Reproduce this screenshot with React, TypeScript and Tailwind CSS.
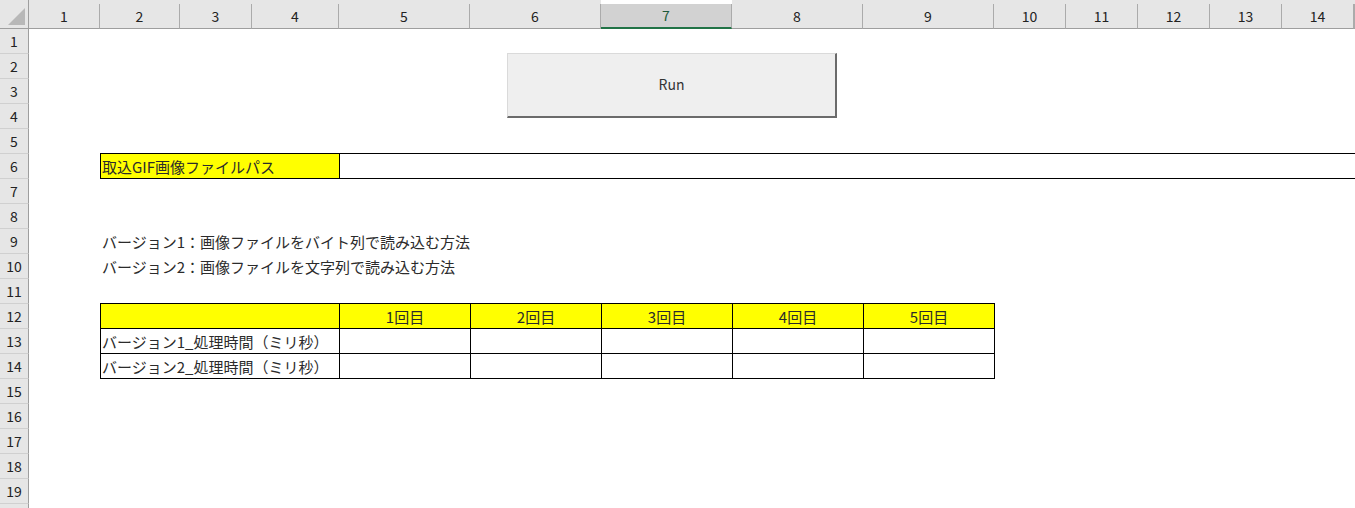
import type { ReactNode } from "react";

const COL_HEADS = ["1", "2", "3", "4", "5", "6", "7", "8", "9", "10", "11", "12", "13", "14", ""];
const ROUNDS = ["1回目", "2回目", "3回目", "4回目", "5回目"];

function RowHead({ n }: { n?: number }) {
  return (
    <div className="flex items-center justify-center border-r border-b border-r-[#9e9e9e] border-b-[#d0d0d0] bg-[#e6e6e6] text-[14px] text-[#222]">
      {n}
    </div>
  );
}

function EmptyRow({ n }: { n?: number }) {
  return (
    <>
      <RowHead n={n} />
      <div className="col-[2/-1]" />
    </>
  );
}

function Cell({ children, className = "" }: { children?: ReactNode; className?: string }) {
  return (
    <div className={`-mt-px -mr-px flex items-center border border-black leading-none whitespace-nowrap ${className}`}>
      {children}
    </div>
  );
}

export default function App() {
  return (
    <div className="relative h-[508px] w-[1355px] overflow-hidden bg-white font-['Noto_Sans_CJK_JP',sans-serif] text-[#2b2b2b]">
      <div className="grid grid-cols-[29px_71px_80px_72px_87px_131px_131px_131px_131px_131px_72px_72px_72px_72px_72px_1fr] grid-rows-[29px_repeat(20,25px)]">
        {/* column header row */}
        <div className="relative border-r border-b border-[#9e9e9e] bg-[#e6e6e6]">
          <svg className="absolute left-[8px] top-[8px]" width="17" height="17" viewBox="0 0 17 17">
            <polygon points="17,0 17,17 0,17" fill="#b8b8b8" />
          </svg>
        </div>
        {COL_HEADS.map((h, i) =>
          h === "7" ? (
            <div
              key={i}
              className="mt-[4px] flex items-center justify-center border-r border-b-2 border-r-[#ababab] border-b-[#217346] bg-[#d2d2d2] pb-[1px] text-[14px] text-[#1d5a3a]"
            >
              {h}
            </div>
          ) : (
            <div key={i} className="flex flex-col bg-[#e6e6e6]">
              <div className="h-[4px]" />
              <div className="flex flex-1 items-center justify-center border-r border-b border-r-[#ababab] border-b-[#9e9e9e] text-[14px] text-[#222]">
                {h}
              </div>
            </div>
          )
        )}

        {[1, 2, 3, 4, 5].map((n) => (
          <EmptyRow key={n} n={n} />
        ))}

        {/* row 6: file path */}
        <RowHead n={6} />
        <div />
        <Cell className="col-span-3 bg-[#ffff00] pl-[1px] text-[15px]">取込GIF画像ファイルパス</Cell>
        <div className="col-[6/-1] -mt-px border-t border-b border-l border-black" />

        <EmptyRow n={7} />
        <EmptyRow n={8} />

        <RowHead n={9} />
        <div />
        <div className="col-[3/-1] flex items-center pl-[2px] text-[15px] leading-none whitespace-nowrap">
          バージョン1：画像ファイルをバイト列で読み込む方法
        </div>
        <RowHead n={10} />
        <div />
        <div className="col-[3/-1] flex items-center pl-[2px] text-[15px] leading-none whitespace-nowrap">
          バージョン2：画像ファイルを文字列で読み込む方法
        </div>

        <EmptyRow n={11} />

        {/* row 12: table header */}
        <RowHead n={12} />
        <div />
        <Cell className="col-span-3 bg-[#ffff00]" />
        {ROUNDS.map((r) => (
          <Cell key={r} className="justify-center bg-[#ffff00] text-[15px]">
            {r}
          </Cell>
        ))}
        <div className="col-span-6" />

        {[1, 2].map((v) => (
          <div key={v} className="contents">
            <RowHead n={12 + v} />
            <div />
            <Cell className="col-span-3 pl-[1px] text-[15px]">バージョン{v}_処理時間（ミリ秒）</Cell>
            {ROUNDS.map((r) => (
              <Cell key={r} />
            ))}
            <div className="col-span-6" />
          </div>
        ))}

        {[15, 16, 17, 18, 19].map((n) => (
          <EmptyRow key={n} n={n} />
        ))}
        {/* row 20 is only a sliver at the bottom edge */}
        <EmptyRow />
      </div>

      {/* Run button shape */}
      <button className="absolute left-[507px] top-[53px] flex h-[65px] w-[330px] items-center justify-center border-t border-l border-r-2 border-b-2 border-t-[#dadada] border-l-[#dadada] border-r-[#6b6b6b] border-b-[#6b6b6b] bg-[#efefef] pb-[1px] text-[14px] text-[#333]">
        Run
      </button>
    </div>
  );
}
